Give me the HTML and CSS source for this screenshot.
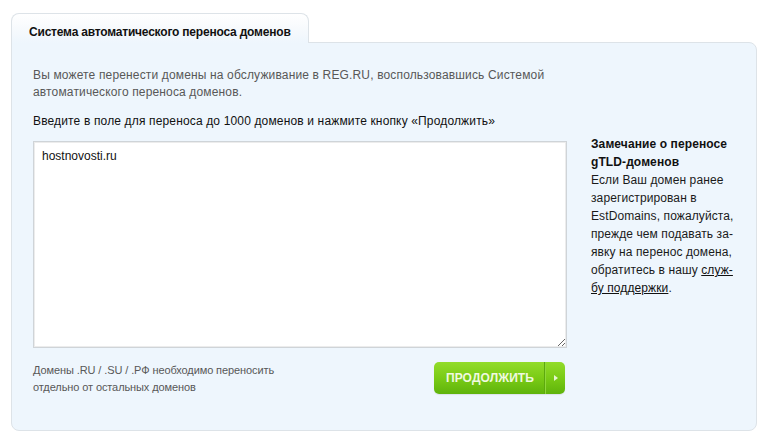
FILE: index.html
```
<!DOCTYPE html>
<html lang="ru">
<head>
<meta charset="utf-8">
<title>Система автоматического переноса доменов</title>
<link rel="stylesheet" href="styles.css">
</head>
<body>
<div class="wrap">
  <div class="tab">Система автоматического переноса доменов</div>
  <div class="panel">
    <p class="intro">Вы можете перенести домены на обслуживание в REG.RU, воспользовавшись Системой<br>автоматического переноса доменов.</p>
    <p class="lead">Введите в поле для переноса до 1000 доменов и нажмите кнопку «Продолжить»</p>
    <div class="row">
      <div class="main">
        <textarea class="domains">hostnovosti.ru</textarea>
        <div class="foot">
          <p class="note">Домены .RU / .SU / .РФ необходимо переносить<br>отдельно от остальных доменов</p>
          <button class="btn" type="button"><span class="btn-label">Продолжить</span><span class="btn-arrow"></span></button>
        </div>
      </div>
      <div class="side">
        <div class="side-title">Замечание о переносе<br>gTLD-доменов</div>
        <div class="side-text">Если Ваш домен ранее<br>зарегистрирован в<br>EstDomains, пожалуйста,<br>прежде чем подавать за-<br>явку на перенос домена,<br>обратитесь в нашу <a href="#">служ-<br>бу поддержки</a>.</div>
      </div>
    </div>
  </div>
</div>
</body>
</html>
```
FILE: styles.css
```
* { box-sizing: border-box; }
html, body { margin: 0; padding: 0; background: #fff; }
body {
  font-family: "Liberation Sans", Arial, sans-serif;
  font-size: 12px;
  color: #222;
}
.wrap {
  width: 746px;
  margin: 13px 0 0 11px;
}
.tab {
  position: relative;
  z-index: 1;
  width: 298px;
  height: 30px;
  margin-bottom: -1px;
  padding: 11px 0 0 17px;
  border: 1px solid #dde3e8;
  border-bottom: none;
  border-radius: 8px 8px 0 0;
  background: linear-gradient(#ffffff 0%, #f7fafd 50%, #eef6fd 100%);
  font-weight: bold;
  font-size: 12px;
  color: #111;
  letter-spacing: -0.2px;
}
.panel {
  height: 389px;
  border: 1px solid #dde3e8;
  border-radius: 0 8px 8px 8px;
  background: #eef6fd;
  padding: 24px 0 0 21px;
}
p { margin: 0; }
.intro {
  color: #585858;
  line-height: 17px;
  letter-spacing: 0.15px;
}
.lead {
  color: #111;
  margin-top: 12px;
  line-height: 17px;
  letter-spacing: 0.15px;
}
.row {
  display: flex;
  gap: 24px;
  margin-top: 11px;
}
.main { width: 534px; }
.domains {
  display: block;
  width: 534px;
  height: 207px;
  margin: 0;
  padding: 7px 8px;
  border: 1px solid #cfd4d8;
  box-shadow: inset 0 0 0 1px #ececec;
  background: #fff;
  font-family: "Liberation Sans", Arial, sans-serif;
  font-size: 12px;
  color: #111;
  resize: both;
  outline: none;
}
.foot {
  display: flex;
  justify-content: space-between;
  align-items: flex-start;
  margin-top: 14px;
}
.note {
  color: #585858;
  font-size: 11px;
  line-height: 17px;
  letter-spacing: -0.1px;
}
.btn {
  display: flex;
  align-items: center;
  width: 131px;
  height: 32px;
  margin: 0 2px 0 0;
  padding: 0;
  border: none;
  border-radius: 5px;
  background: linear-gradient(#92dc2a 0%, #7acb16 50%, #5fb30b 100%);
  box-shadow: 0 1px 1px rgba(0,0,0,0.08);
  cursor: pointer;
}
.btn-label {
  flex: 1;
  height: 100%;
  display: flex;
  align-items: center;
  justify-content: center;
  padding-left: 2px;
  border-right: 1px solid #5da80e;
  color: #f0f9e0;
  font-family: "Liberation Sans", Arial, sans-serif;
  font-weight: bold;
  font-size: 12px;
  text-transform: uppercase;
  letter-spacing: 0.1px;
}
.btn-arrow {
  width: 20px;
  height: 100%;
  display: flex;
  align-items: center;
  justify-content: center;
  border-left: 1px solid #8fd83a;
}
.btn-arrow::before {
  content: "";
  display: block;
  border-left: 4px solid #e6f6cf;
  border-top: 3px solid transparent;
  border-bottom: 3px solid transparent;
}
.side {
  width: 160px;
  margin-top: -6px;
  line-height: 18px;
  color: #1a1a1a;
  letter-spacing: 0.1px;
}
.side-title { font-weight: bold; color: #111; }
.side-text a { color: #111; text-decoration: underline; }
```
